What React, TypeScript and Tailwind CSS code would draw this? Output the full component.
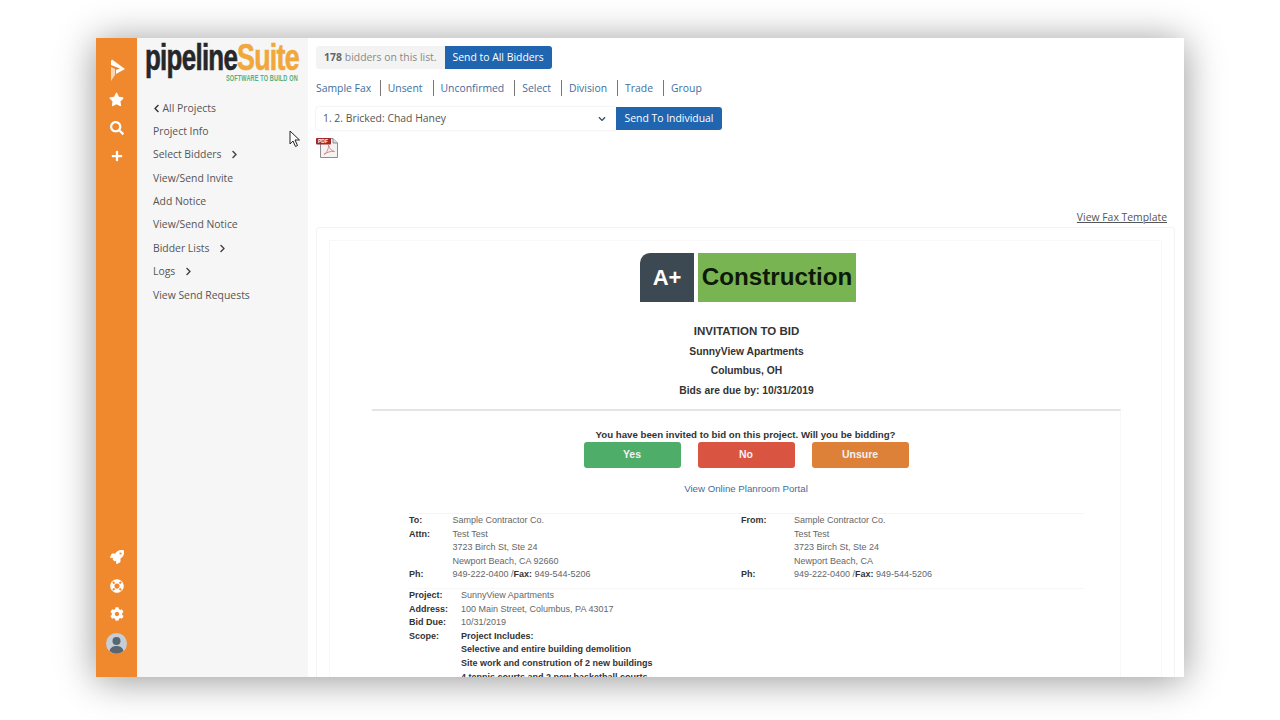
import { FaChevronDown, FaChevronLeft, FaChevronRight, FaCog, FaLifeRing, FaPlus, FaRocket, FaSearch, FaStar } from 'react-icons/fa';

const navItems = [
  { label: 'Project Info' },
  { label: 'Select Bidders', arrow: true },
  { label: 'View/Send Invite' },
  { label: 'Add Notice' },
  { label: 'View/Send Notice' },
  { label: 'Bidder Lists', arrow: true },
  { label: 'Logs', arrow: true },
  { label: 'View Send Requests' },
];

const filters = ['Sample Fax', 'Unsent', 'Unconfirmed', 'Select', 'Division', 'Trade', 'Group'];

function Contact({ title, attn, city }: { title: string; attn?: boolean; city: string }) {
  return (
    <div className="flex">
      <div className="font-bold text-[#333]" style={{ width: title === 'To:' ? 43.5 : 53 }}>
        <div>{title}</div>
        <div>{attn ? 'Attn:' : '\u00a0'}</div>
        <div>&nbsp;</div>
        <div>&nbsp;</div>
        <div>Ph:</div>
      </div>
      <div>
        <div>Sample Contractor Co.</div>
        <div>Test Test</div>
        <div>3723 Birch St, Ste 24</div>
        <div>{city}</div>
        <div>
          949-222-0400 /<b className="text-[#333]">Fax:</b> 949-544-5206
        </div>
      </div>
    </div>
  );
}

function PdfIcon() {
  return (
    <svg width="23" height="21" viewBox="0 0 23 21" className="block">
      <path d="M4.5 1.5H17l4.5 4.500v14.500h-17z" fill="#f4f2f2" stroke="#8d8d8d" />
      <path d="M17 1.5V6h4.500" fill="#ddd" stroke="#8d8d8d" />
      <path d="M8 17.500c3-2 5-6.500 4.500-9.500 1 4 3 5.500 6 6.500-4-.5-7 .5-10.500 3z" fill="none" stroke="#d08a8a" strokeWidth="1" />
      <rect x="0" y="1" width="15" height="6.500" rx="1" fill="#a3262a" />
      <text x="2" y="6.400" fontSize="5" fontWeight="700" fill="#fff" fontFamily="Liberation Sans, sans-serif">PDF</text>
    </svg>
  );
}

export default function App() {
  return (
    <div className="h-[720px] w-[1280px] overflow-hidden bg-white pl-[96px] pt-[38px]">
      <div className="relative flex h-[639px] w-[1088px] bg-white font-['Open_Sans',sans-serif] shadow-[0_3px_36px_rgba(0,0,0,0.42)]">
        {/* icon rail */}
        <div className="flex w-[41px] shrink-0 flex-col items-center bg-[#f0882d] pb-[23px] pt-[20px] text-white">
          <svg width="18" height="24" viewBox="0 0 18 24" className="ml-[2px]">
            <path d="M3 1.500 L16 11 L7 16 L7 12 L11 10.500 L2 7 L2 3z" fill="#fff" />
            <path d="M2 9 L6 11 L6 17 L2 23z" fill="#fbd9b8" />
          </svg>
          <FaStar className="mt-[10px] text-[15px]" />
          <FaSearch className="mt-[14px] text-[14px]" />
          <FaPlus className="mt-[15px] text-[12px]" />
          <div className="flex-1" />
          <FaRocket className="text-[14px]" />
          <FaLifeRing className="mt-[15px] text-[14px]" />
          <FaCog className="mt-[14px] text-[14px]" />
          <svg width="21" height="21" viewBox="0 0 21 21" className="mt-[12px]">
            <circle cx="10.500" cy="10.500" r="10.500" fill="#c3ced8" />
            <circle cx="10.500" cy="8" r="4" fill="#5b6570" />
            <path d="M3.500 18c1-4 4-5 7-5s6 1 7 5a10.500 10.500 0 0 1-14 0z" fill="#5b6570" />
          </svg>
        </div>

        {/* nav column */}
        <div className="w-[171px] shrink-0 bg-[#f6f6f6]">
          <div className="relative h-[58.500px] pl-[8px] pt-[5px] font-['Liberation_Sans',sans-serif]">
            <div className="flex h-[30px] items-start whitespace-nowrap">
              <span className="inline-block w-[92px] origin-left scale-x-[0.72] text-[36px] font-bold leading-[30px] tracking-[-1px] text-[#25272b] [-webkit-text-stroke:0.6px_#25272b]">
                pipeline
              </span>
              <span className="inline-block w-[60px] origin-left scale-x-[0.745] text-[36px] font-bold leading-[30px] tracking-[-1px] text-[#f0a73c] [-webkit-text-stroke:0.6px_#f0a73c]">
                Suite
              </span>
            </div>
            <div className="absolute left-[89px] top-[36px] origin-left scale-x-[0.655] whitespace-nowrap text-[8.500px] font-bold leading-[9px] tracking-[0.2px] text-[#55b07c]">
              SOFTWARE TO BUILD ON
            </div>
          </div>
          <div className="pl-[16px] text-[10.400px] text-[#555]">
            <div className="flex h-[23.400px] items-center pt-[1px]">
              <FaChevronLeft className="ml-[-1.500px] mr-[2px] text-[9px] text-[#333]" />
              All Projects
            </div>
            {navItems.map((item) => (
              <div key={item.label} className="flex h-[23.400px] items-center">
                {item.label}
                {item.arrow && <FaChevronRight className="ml-[9px] text-[9px] text-[#444]" />}
              </div>
            ))}
          </div>
        </div>

        {/* main column */}
        <div className="min-w-0 flex-1 overflow-hidden pl-[8px] pr-[9px] pt-[8px]">
          <div className="flex h-[23px] items-stretch text-[10.400px]">
            <div className="flex items-center rounded-l-[3px] bg-[#f3f3f3] px-[8px] text-[#8a8a8a]">
              <b className="mr-[3px] text-[#666]">178</b> bidders on this list.
            </div>
            <div className="flex items-center rounded-r-[3px] bg-[#1f65b0] px-[8px] text-white">Send to All Bidders</div>
          </div>

          <div className="mt-[8px] flex h-[22px] items-center text-[10.400px] text-[#3f6d9e]">
            {filters.map((f, i) => (
              <span
                key={f}
                className={
                  i === 0
                    ? 'leading-[16px]'
                    : i === 1
                      ? 'ml-[8.500px] border-l border-[#777] pl-[7px] leading-[16px]'
                      : 'ml-[10px] border-l border-[#777] pl-[7px] leading-[16px]'
                }
              >
                {f}
              </span>
            ))}
          </div>

          <div className="mt-[8px] flex h-[23px] w-[406px] text-[10.400px]">
            <div className="flex w-[300px] items-center justify-between rounded-l-[3px] bg-white pl-[7px] pr-[10px] text-[#555] shadow-[0_0_2px_rgba(0,0,0,0.15)]">
              1. 2. Bricked: Chad Haney
              <FaChevronDown className="text-[8px] text-[#2d4a6b]" />
            </div>
            <div className="flex flex-1 items-center justify-center rounded-r-[3px] bg-[#1f65b0] text-white">Send To Individual</div>
          </div>

          <div className="mt-[7px] h-[22px]">
            <PdfIcon />
          </div>

          <div className="mr-[8px] mt-[50px] text-right text-[10.400px] leading-[16px] text-[#555] underline">View Fax Template</div>

          {/* fax preview */}
          <div className="mt-[2px] rounded-[3px] border border-[#f3f3f3] px-[12px] pt-[12px]">
            <div className="border border-[#f8f8f8] pt-[12px] font-['Liberation_Sans',sans-serif] text-[#333]">
              <div className="flex justify-center pl-[5px]">
                <div className="flex h-[49px] w-[54px] items-center justify-center rounded-tl-[10px] bg-[#3c4953] text-[22px] font-bold text-white">
                  A+
                </div>
                <div className="ml-[4px] flex h-[49px] w-[158px] items-center justify-center bg-[#78b552] text-[24.200px] font-bold text-[#0d1a08]">
                  Construction
                </div>
              </div>

              <div className="mt-[20px] pl-[2px] text-center text-[11.500px] font-bold leading-[19.500px]">
                <div>INVITATION TO BID</div>
                <div className="text-[10.300px]">SunnyView Apartments</div>
                <div className="text-[10.300px]">Columbus, OH</div>
                <div className="text-[10.300px]">Bids are due by: 10/31/2019</div>
              </div>

              <div className="ml-[42px] mr-[40px] mt-[9px] border-r border-t-2 border-[#e4e4e4] border-r-[#f8f8f8] pb-[40px]">
                <div className="mt-[17px] pr-[1px] text-center text-[9.700px] font-bold leading-[13px]">
                  You have been invited to bid on this project. Will you be bidding?
                </div>
                <div className="mt-[1px] flex justify-center gap-[17px] text-[10.500px] font-bold text-[#f2f2f2]">
                  <div className="flex h-[26px] w-[97px] items-center justify-center rounded-[3px] bg-[#4ead68]">Yes</div>
                  <div className="flex h-[26px] w-[97px] items-center justify-center rounded-[3px] bg-[#d95542]">No</div>
                  <div className="flex h-[26px] w-[97px] items-center justify-center rounded-[3px] bg-[#dd8038]">Unsure</div>
                </div>
                <div className="mt-[14px] text-center text-[9.700px] leading-[14px] text-[#3f6d9e]">View Online Planroom Portal</div>

                <div className="ml-[37px] mr-[36px] mt-[17px] border-t border-[#f5f5f5] text-[9px] leading-[13.600px] text-[#666]">
                  <div className="flex">
                    <div className="w-[332px]">
                      <Contact title="To:" attn city="Newport Beach, CA 92660" />
                    </div>
                    <Contact title="From:" city="Newport Beach, CA" />
                  </div>
                  <div className="mt-[6px] flex border-t border-[#f7f7f7]">
                    <div className="w-[52px] font-bold text-[#333]">
                      <div>Project:</div>
                      <div>Address:</div>
                      <div>Bid Due:</div>
                      <div>Scope:</div>
                    </div>
                    <div>
                      <div>SunnyView Apartments</div>
                      <div>100 Main Street, Columbus, PA 43017</div>
                      <div>10/31/2019</div>
                      <div className="font-bold text-[#333]">
                        <div>Project Includes:</div>
                        <div>Selective and entire building demolition</div>
                        <div>Site work and constrution of 2 new buildings</div>
                        <div>4 tennis courts and 2 new basketball courts</div>
                      </div>
                    </div>
                  </div>
                </div>
              </div>
            </div>
          </div>
        </div>

        {/* mouse pointer */}
        <svg width="12" height="18" viewBox="0 0 12 18" className="absolute left-[193px] top-[92px]">
          <path d="M1 1v13l3-3 2.500 5.500 2-1L6 10h4.500z" fill="#fff" stroke="#222" strokeWidth="1" />
        </svg>
      </div>
    </div>
  );
}
